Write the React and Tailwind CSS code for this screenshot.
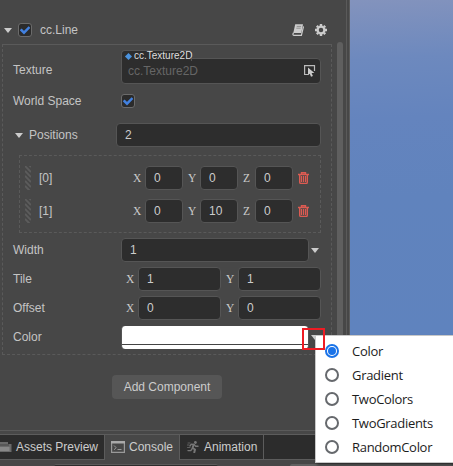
import React from 'react';

const SANS = "font-['Liberation_Sans',Arial,sans-serif]";

function Caret({ className = '' }) {
  return (
    <svg className={`h-[5px] w-2 shrink-0 ${className}`} viewBox="0 0 8 5">
      <path d="M0 0H8L4 5Z" fill="#cccccc" />
    </svg>
  );
}

function Check() {
  return (
    <span className="flex h-[14px] w-[14px] shrink-0 items-center justify-center rounded-[3px] border border-[#6b6b6b] bg-[#2b2b2b]">
      <svg className="h-[10px] w-[10px]" viewBox="0 0 10 10" fill="none">
        <path d="M0.7 4.4L4 7.7L9.5 2.1" stroke="#4281e0" strokeWidth="2.5" />
      </svg>
    </span>
  );
}

function Field({ className = '', children }) {
  return (
    <div className={`flex h-6 items-center rounded border border-[#555] bg-[#2d2d2d] pl-2 text-[#ccc] ${className}`}>
      {children}
    </div>
  );
}

function Axis({ className = '', children }) {
  return (
    <span className={`shrink-0 pb-px font-['Liberation_Serif',serif] text-[11.5px] leading-3 text-[#cccccc] ${className}`}>
      {children}
    </span>
  );
}

function Trash() {
  return (
    <svg className="ml-[5px] h-3 w-[11px] shrink-0" viewBox="0 0 11 12" fill="none" stroke="#dc5b52">
      <path d="M0 2.5H11M3.5 2.2V0.7H7.5V2.2M1.7 3V10.2Q1.7 11.4 2.8 11.4H8.2Q9.3 11.4 9.3 10.2V3" strokeWidth="1.4" />
      <path d="M3.5 4V10M5.5 4V10M7.5 4V10" strokeWidth="1.2" />
    </svg>
  );
}

function PositionRow({ label, values }) {
  return (
    <div className="flex h-6 items-center">
      <svg className="h-6 w-[6px] shrink-0" viewBox="0 0 6 24" stroke="#5c5c5c" strokeWidth="1.9">
        <path d="M0 -5L6 1M0 0L6 6M0 5L6 11M0 10L6 16M0 15L6 21M0 20L6 26" />
      </svg>
      <span className="ml-2 w-[94px]">{label}</span>
      <Axis className="w-3">X</Axis>
      <Field className="w-[38px]">{values[0]}</Field>
      <Axis className="ml-[5px] w-3">Y</Axis>
      <Field className="w-[38px]">{values[1]}</Field>
      <Axis className="ml-[5px] w-3">Z</Axis>
      <Field className="w-[38px]">{values[2]}</Field>
      <Trash />
    </div>
  );
}

function PairRow({ label, x, y }) {
  return (
    <div className="mt-[5px] flex h-6 items-center pl-[10px]">
      <span className="w-[113px]">{label}</span>
      <Axis className="w-3">X</Axis>
      <Field className="w-[83px]">{x}</Field>
      <Axis className="ml-[5px] w-3">Y</Axis>
      <Field className="w-[83px]">{y}</Field>
    </div>
  );
}

function Book() {
  return (
    <svg className="h-3 w-3" viewBox="0 0 12 12">
      <path d="M3.2 0.3H11L9.3 9H1.3Z" fill="#cccccc" />
      <path d="M4.7 2.4H9.1M4.3 4.2H8.7" stroke="#888" strokeWidth="0.9" />
      <path d="M1.5 8.7Q0.2 11.2 1.9 11.3H9.4L11.5 2.4" fill="none" stroke="#cccccc" strokeWidth="1.2" />
    </svg>
  );
}

function Gear() {
  return (
    <svg className="ml-[11px] h-3 w-3" viewBox="0 0 12 12">
      <g stroke="#cccccc">
        <circle cx="6" cy="6" r="3.4" fill="none" strokeWidth="2.3" />
        <path d="M6 0V2M6 10V12M0 6H2M10 6H12M1.8 1.8L3.1 3.1M8.9 8.9L10.2 10.2M1.8 10.2L3.1 8.9M8.9 3.1L10.2 1.8" strokeWidth="2.4" />
      </g>
    </svg>
  );
}

function Inspector() {
  return (
    <div className="flex h-[431px] w-[347px] shrink-0 flex-col border-r border-[#5a5a5a]">
      <div className="flex h-11 items-center pl-1 pt-4">
        <Caret />
        <span className="ml-[6px] flex"><Check /></span>
        <span className="ml-2 w-[252px]">cc.Line</span>
        <Book />
        <Gear />
      </div>
      <div className="flex">
        <div className="ml-[2px] h-[311px] w-[330px] shrink-0 border border-dashed border-[#5a5a5a] [border-top-style:solid]">
          <div className="mt-[5px] flex h-[34px] pl-[10px]">
            <span className="w-[108px] pt-[12px] leading-4">Texture</span>
            <div className="relative w-[200px] pt-2">
              <div className="flex h-[26px] items-center rounded rounded-tl-none border border-[#555] bg-[#2d2d2d] pl-[6px] pr-1 text-[#666]">
                <span className="flex-1 pb-px">cc.Texture2D</span>
                <svg className="h-3 w-3" viewBox="0 0 12 12">
                  <path d="M10.5 6V0.6H0.6V9.5H4" fill="none" stroke="#bbb" strokeWidth="1.2" />
                  <path d="M4 2.5V10.3L5.8 8.7L7 11.7L8.9 10.9L7.6 8.1H10.4Z" fill="#ccc" />
                </svg>
              </div>
              <div className="absolute left-0 top-0 flex h-[11px] w-[71px] items-center rounded-t border border-b-0 border-[#555] bg-[#2d2d2d] pl-1 text-[10px] leading-[10px] text-[#dedede]">
                <span className="mr-[3px] h-[5px] w-[5px] shrink-0 rotate-45 bg-[#4b93df]" />
                cc.Texture2D
              </div>
            </div>
          </div>
          <div className="mt-[10px] flex h-[14px] items-center pl-[10px]">
            <span className="w-[108px]">World Space</span>
            <Check />
          </div>
          <div className="mt-[15px] flex h-6 items-center pl-3">
            <Caret />
            <span className="ml-[6px] w-[87px]">Positions</span>
            <Field className="w-[205px]">2</Field>
          </div>
          <div className="ml-4 mt-2 flex h-[78px] w-[302px] flex-col gap-[9px] border border-dashed border-[#5a5a5a] pl-[5px] pt-[10px]">
            <PositionRow label="[0]" values={['0', '0', '0']} />
            <PositionRow label="[1]" values={['0', '10', '0']} />
          </div>
          <div className="mt-[5px] flex h-6 items-center pl-[10px]">
            <span className="w-[108px]">Width</span>
            <Field className="w-[188px]">1</Field>
            <Caret className="ml-[2px]" />
          </div>
          <PairRow label="Tile" x="1" y="1" />
          <PairRow label="Offset" x="0" y="0" />
          <div className="mt-[5px] flex h-6 items-center pl-[10px]">
            <span className="w-[108px]">Color</span>
            <div className="flex h-[23px] w-[188px] flex-col overflow-hidden rounded border-x border-[#555] bg-white pt-[18px]">
              <div className="h-px bg-[#444]" />
            </div>
            <Caret className="ml-[2px]" />
          </div>
        </div>
        <div className="ml-[5px] mt-[-2px] h-[390px] w-[6px] rounded-full bg-[#5f5f5f]" />
      </div>
      <button className="ml-28 mt-[-57px] h-6 w-[110px] shrink-0 rounded bg-[#565656] text-[#ccc]">Add Component</button>
    </div>
  );
}

function TabBar() {
  return (
    <div className="flex h-[26px] shrink-0 border-y border-[#5c5c5c] bg-[#2c2c2c] text-[#ccc]">
      <div className="flex w-[105px] items-center border-r border-[#5c5c5c]">
        <svg className="h-3 w-3" viewBox="0 0 12 12">
          <path d="M0 1H8V3H11.5V11H0Z" fill="#6a6a6a" />
          <path d="M0 4H9" stroke="#444" />
          <path d="M0 6H9.5V10H0Z" fill="#888" />
        </svg>
        <span className="ml-1 whitespace-nowrap">Assets Preview</span>
      </div>
      <div className="-mb-px flex w-[75px] items-center border-r border-[#5c5c5c] bg-[#474747] pb-px pl-[6px]">
        <svg className="h-3 w-[14px]" viewBox="0 0 14 12" fill="none" stroke="#999">
          <path d="M0.6 0.6H13.4V11.4H0.6Z" strokeWidth="1.2" />
          <path d="M0 1.3H14" strokeWidth="2.4" stroke="#aaa" />
          <path d="M3 4.5L5.2 6.7L3 8.8M6.5 8.5H10.5" strokeWidth="1" />
        </svg>
        <span className="ml-1">Console</span>
      </div>
      <div className="flex w-[84px] items-center border-r border-[#5c5c5c] pl-[7px]">
        <svg className="h-3 w-3" viewBox="0 0 12 12" fill="none" stroke="#777" strokeLinecap="round" strokeLinejoin="round">
          <circle cx="8.4" cy="1.5" r="1.4" fill="#777" stroke="none" />
          <path d="M6.6 3.7L5.6 7L8 8.5L7.3 11.3" strokeWidth="2" />
          <path d="M5.4 7.4L3.8 9.6H1M3 5L4.3 3.2L7 3.4L8.7 5.3H11" strokeWidth="1.4" />
          <path d="M1 2H3M0.3 4H2M0.5 6.5H3" strokeWidth="0.7" />
        </svg>
        <span className="ml-[5px]">Animation</span>
      </div>
    </div>
  );
}

const MODES = ['Color', 'Gradient', 'TwoColors', 'TwoGradients', 'RandomColor'];

function ModeMenu() {
  return (
    <div className="absolute left-[315px] top-[335px] h-[128px] w-[138px] border-b border-l border-t border-[#c8c8c8] bg-white pt-[3px] font-['Open_Sans','Noto_Sans',sans-serif] text-[13px] tracking-[-0.3px] text-[#1c1c1c] shadow-[2px_3px_3px_rgba(0,0,0,0.35)]">
      {MODES.map((mode, i) => (
        <div key={mode} className="flex h-6 items-center pl-[9px]">
          <span
            className={`flex h-[14px] w-[14px] items-center justify-center rounded-full border-2 ${
              i === 0 ? 'border-[#1a73e8]' : 'border-[#66696d]'
            }`}
          >
            {i === 0 && <span className="h-2 w-2 rounded-full bg-[#1a73e8]" />}
          </span>
          <span className="ml-[13px]">{mode}</span>
        </div>
      ))}
    </div>
  );
}

export default function App() {
  return (
    <div className={`relative flex h-[466px] w-[453px] flex-col overflow-hidden bg-[#474747] text-[12px] leading-4 text-[#c4c4c4] ${SANS}`}>
      <div className="flex h-[431px] shrink-0 overflow-hidden border-b border-[#5a5a5a]">
        <Inspector />
        <div className="ml-[2px] flex-1 border-l border-[#5a5a5a] bg-[linear-gradient(177deg,#8393bd_0px,#6d89be_60px,#6484be_120px,#6083bd_200px,#5f83be_340px)]" />
      </div>
      <div className="h-[3px] shrink-0" />
      <TabBar />
      <div className="flex flex-1 items-end">
        <div className="ml-[54px] h-[2px] w-[164px] rounded-t border-t border-[#5a5a5a] bg-[#2c2c2c]" />
        <div className="ml-[72px] h-[2px] flex-1 rounded-t bg-[#606060]" />
      </div>
      <ModeMenu />
      <div className="absolute left-[302px] top-[328px] h-[22px] w-[23px] border-2 border-[#ee1c24]" />
    </div>
  );
}
